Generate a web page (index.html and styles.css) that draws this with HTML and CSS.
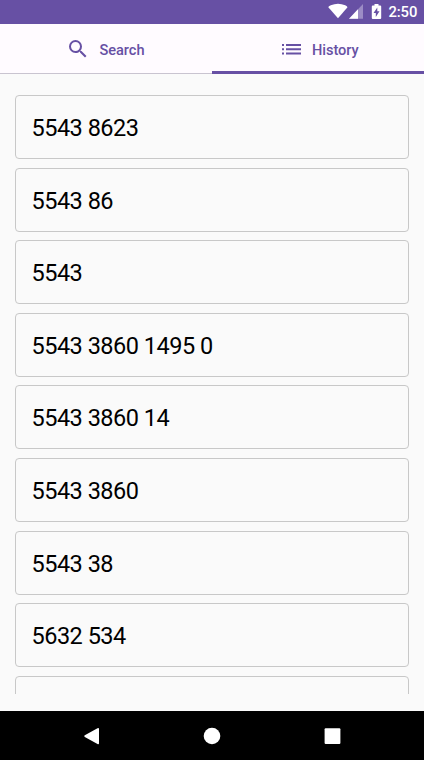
FILE: index.html
```html
<!DOCTYPE html>
<html lang="en">
<head>
<meta charset="utf-8">
<title>History</title>
<link rel="stylesheet" href="styles.css">
</head>
<body>
<div class="status">
  <svg width="92" height="24" viewBox="325 0 92 24" class="status-icons">
    <path fill="#fff" d="M338 18.3 328.3 7.2Q328.3 6.4 330.8 5.3Q338 2.3 345.2 5.3Q347.3 6.4 347.5 7.2Z"/>
    <path fill="#9c8cc5" d="M363 4V18.7H349Z"/>
    <path fill="#fff" d="M358 9.2V18.7H349Z"/>
    <path fill="#fff" fill-rule="evenodd" d="M374.5 4h4v1.5h1.700q1 0 1 1V18q0 1-1 1h-7.400q-1 0-1-1V6.500q0-1 1-1h1.700zM377.300 7.500 373.500 13h2.300v4L379.500 11.300h-2.200z"/>
  </svg>
  <span class="clock">2:50</span>
</div>
<div class="tabs">
  <div class="tab">
    <svg class="icon-search" width="24" height="24" viewBox="0 0 24 24"><path fill="#6750a4" d="M15.500 14h-.79l-.28-.27A6.471 6.471 0 0 0 16 9.500 6.500 6.500 0 1 0 9.500 16c1.610 0 3.090-.59 4.230-1.570l.27.280v.79l5 4.990L20.490 19l-4.990-5zm-6 0C7.010 14 5 11.990 5 9.500S7.010 5 9.500 5 14 7.010 14 9.500 11.990 14 9.500 14z"/></svg>
    <span>Search</span>
  </div>
  <div class="tab active">
    <svg class="icon-list" width="19" height="11" viewBox="0 0 19 11"><path fill="#6750a4" d="M0 0h2v2H0zM4 0h15v2H4zM0 4.300h2v2H0zM4 4.300h15v2H4zM0 8.500h2v2H0zM4 8.500h15v2H4z"/></svg>
    <span>History</span>
  </div>
</div>
<div class="list">
  <div class="card">5543 8623</div>
  <div class="card">5543 86</div>
  <div class="card">5543</div>
  <div class="card">5543 3860 1495 0</div>
  <div class="card">5543 3860 14</div>
  <div class="card">5543 3860</div>
  <div class="card">5543 38</div>
  <div class="card">5632 534</div>
  <div class="card"></div>
</div>
<div class="nav">
  <svg width="424" height="49" viewBox="0 711 424 49" fill="#fff">
    <path d="M99 729V743.200Q99 744.700 97.500 744L84.800 737Q83.400 736 84.800 735.200L97.500 728.200Q99 727.500 99 729Z"/>
    <circle cx="212" cy="736" r="8.300"/>
    <rect x="324.600" y="728.200" width="15.800" height="15.800" rx="1"/>
  </svg>
</div>
</body>
</html>
```
FILE: styles.css
```css
* { box-sizing: border-box; }
body {
  margin: 0;
  height: 760px;
  display: flex;
  flex-direction: column;
  overflow: hidden;
  background: #fafafa;
  font-family: Roboto, sans-serif;
}
.status {
  height: 24px;
  flex: none;
  display: flex;
  background: #6750a4;
  color: #fff;
  padding-left: 325px;
}
.status-icons { flex: none; margin-right: -28.5px; }
.clock {
  font-size: 14.8px;
  font-weight: 500;
  line-height: 25px;
  letter-spacing: -0.1px;
}
.tabs {
  height: 50px;
  flex: none;
  display: flex;
  background: #fffbff;
}
.tab {
  width: 212px;
  display: flex;
  align-items: center;
  color: #6750a4;
  font-size: 14.6px;
  font-weight: 500;
  letter-spacing: -0.05px;
  border-bottom: 1px solid #c9c4d0;
  padding: 0 0 0 66px;
}
.tab.active {
  border-bottom: 3px solid #6750a4;
  padding: 3px 0 0 70px;
}
.tab span { padding-top: 3px; }
.tab.active span { padding-top: 1px; }
.icon-search { margin-right: 9.5px; }
.icon-list { margin-right: 11px; }
.list {
  height: 620px;
  flex: none;
  overflow: hidden;
  padding: 21px 15px 0;
  display: flex;
  flex-direction: column;
  gap: 8.6px;
}
.card {
  height: 64px;
  flex: none;
  border: 1px solid #c8c8c8;
  border-radius: 4px;
  padding-left: 15.5px;
  font-size: 23.5px;
  line-height: 64px;
  letter-spacing: -0.5px;
  color: #000;
}
.nav {
  height: 49px;
  flex: none;
  margin-top: auto;
  background: #000;
}
.nav svg { display: block; }
```
